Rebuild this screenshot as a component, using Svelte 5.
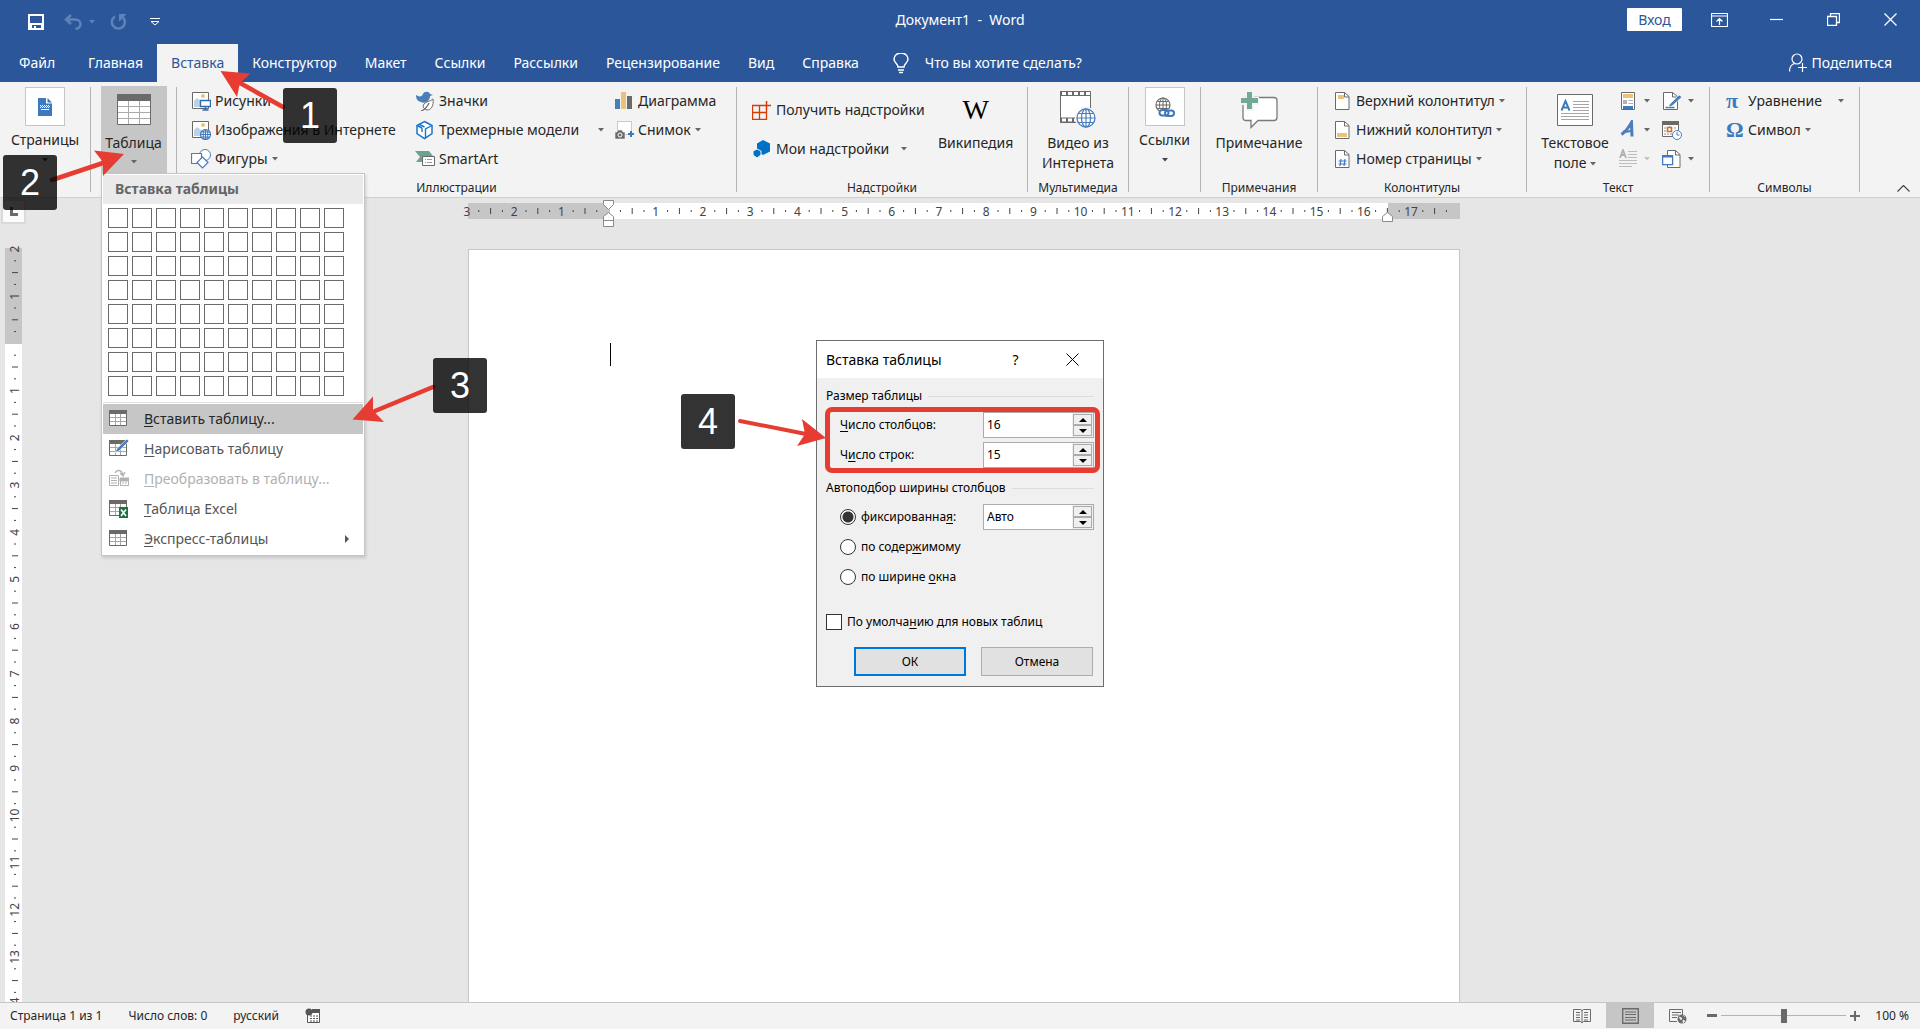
<script lang="ts">
  type Mark = { at: number; label?: string; kind: "num" | "bar" | "dot" };

  const tabs = ["Главная", "Вставка", "Конструктор", "Макет", "Ссылки", "Рассылки", "Рецензирование", "Вид", "Справка"];
  let activeTab = $state("Вставка");

  let columns = $state("16");
  let rows = $state("15");
  let fixedWidth = $state("Авто");
  let fit = $state("fixed");
  let remember = $state(false);
  let zoom = $state(50);

  // Ruler marks in quarters of a centimetre, counted from the margin
  function marks(from: number, to: number): Mark[] {
    const list: Mark[] = [];
    for (let q = from * 4; q < to * 4; q++) {
      if (q === 0) continue;
      const r = Math.abs(q) % 4;
      if (r === 0) list.push({ at: q / 4, label: String(Math.abs(q / 4)), kind: "num" });
      else list.push({ at: q / 4, kind: r === 2 ? "bar" : "dot" });
    }
    return list;
  }

  const hMarks = marks(-3, 18);
  const vMarks = marks(-2, 15);
  const cm = 47.2;
  const cells = Array.from({ length: 80 });

  const tableBase = `<path d="M.5 1.5h17v15h-17z" fill="#fff" stroke="#6a6a6a"/><path d="M0 1h18v4H0z" fill="#6a6a6a"/><path d="M6.5 5v11M11.5 5v11M1 8.500h16M1 12.500h16" stroke="#a6a6a6"/>`;
  const pic = `<path d="M1.500 1.500h16v16h-16z" fill="#fff" stroke="#6a6a6a"/><path d="M3 16V10l3-3 4 3v6z" fill="#bcd0e6"/><circle cx="12" cy="5" r="2" fill="#ebc17c"/>`;
  const pageBase = `<path d="M3.500 1.500h9l4.500 4v13H3.500z" fill="#fff" stroke="#6a6a6a"/><path d="M12.500 1.500v4.500h4.500" fill="none" stroke="#6a6a6a"/>`;

  const icons: Record<string, string> = {
    table: tableBase,
    draw: tableBase + `<path d="M18 0L8 9.500 6 13.500l4-1.500L20 2z" fill="#4a7ebb" stroke="#fff" stroke-width=".6"/>`,
    convert: `<path d="M.5 6.500h9v10h-9z" fill="#fff" stroke="#b1b1b1"/><path d="M2 9h6M2 11.500h6M2 14h6" stroke="#b1b1b1"/><path d="M11.500 9.500h8v7h-8z" fill="#fff" stroke="#b1b1b1"/><path d="M11 9h9v3h-9zM13 14h2M16 14h2" fill="#b1b1b1" stroke="#b1b1b1"/><path d="M6 4c2-4 7-3 8 2M11 4l3 3 2-4" fill="none" stroke="#b1b1b1" stroke-width="1.300"/>`,
    excel: tableBase + `<path d="M10 8h9v11h-9z" fill="#1e7145"/><path d="M12 10.500l5 6.500M17 10.500L12 17" stroke="#fff" stroke-width="1.600"/>`,
    picture: pic + `<path d="M9.500 9.500h10v6h-10z" fill="#fff" stroke="#2f6db5" stroke-width="1.400"/><path d="M14.500 15.500v3M11.500 19h6" stroke="#2f6db5" stroke-width="1.500"/>`,
    online: pic + `<circle cx="14.500" cy="14.500" r="5" fill="#fff" stroke="#3f79bd" stroke-width="1.200"/><path d="M9.500 14.500h10M14.500 9.500v10M10.500 12h8M10.500 17h8" stroke="#3f79bd"/><ellipse cx="14.500" cy="14.500" rx="2.300" ry="5" fill="none" stroke="#3f79bd"/>`,
    shapes: `<circle cx="14" cy="6" r="5.500" fill="#fff" stroke="#4a7ebb"/><path d="M.5 4.500h10v10H.5z" fill="#fff" stroke="#4a7ebb" stroke-width="1.200"/><path d="M11.500 8l5.500 5.500L11.500 19 6 13.500z" fill="#fff" stroke="#4a7ebb" stroke-width="1.200"/>`,
    symbols: `<path d="M1 4c3 2 6 2 7-1 1-3 6-3 7 0l3 1-3 1c0 5-5 8-9 6C2 10 1 7 1 4z" fill="#4a7ebb"/><path d="M18 8c1 7-2 11-6 11-3-1-5-3-3-6 2-3 6-2 9-5z" fill="#fff" stroke="#6a6a6a"/><path d="M6 20c3-1 6-4 8-8" fill="none" stroke="#6a6a6a" stroke-width="1.300"/>`,
    cube: `<path d="M9.500 1.500l7.500 4v8l-7.500 5-7.500-5v-8z" fill="#fff" stroke="#1a76cc" stroke-width="1.500"/><path d="M2 5.500l5 2.500M17 5.500l-6.500 3.500v9M4.500 4.500l5 2.500M7 8v4" fill="none" stroke="#1a76cc" stroke-width="1.400"/>`,
    smartart: `<path d="M0 2h14l4 5H8v6H1l4-5z" fill="#6ba292"/><path d="M7.500 7.500h12v9h-12z" fill="#fff" stroke="#6a6a6a"/><path d="M10 10.500h1M10 13.500h1M12 10.500h5M12 13.500h5" stroke="#9a9a9a"/>`,
    chart: `<path d="M1 8h5v10H1z" fill="#4a7ebb"/><path d="M7 1h5v17H7z" fill="#ebc17c"/><path d="M13 5h5v13h-5z" fill="#6a6a6a"/>`,
    shot: `<path d="M3.500 1.500h14v13h-14z" fill="#fff" stroke="#9a9a9a" stroke-dasharray="1 1"/><path d="M1 12h2l1-2h4l1 2h2v7H1z" fill="#6a6a6a" stroke="#f3f3f3" stroke-width=".6"/><circle cx="6" cy="15" r="2" fill="none" stroke="#fff"/><path d="M17 11v6M14 14h6" stroke="#3f79bd" stroke-width="2"/>`,
    store: `<path d="M.500 5.500h14v14h-14zM7.500 5.500v14M.500 12.500h14" fill="none" stroke="#d83b01" stroke-width="1.300"/><path d="M10 1h10v9h-10z" fill="#f3f3f3"/><path d="M14.500 1v9M10 5.500h9" stroke="#d83b01" stroke-width="1.500"/>`,
    addins: `<path d="M11 1l7 3.500v8L11 16l-6-3.500v-8z" fill="#0072c6"/><path d="M5 10l4 2v4l-4 3-4-3v-4z" fill="#0072c6" stroke="#f3f3f3"/>`,
    header: pageBase + `<path d="M6 4h6v4H6z" fill="#ebc17c"/>`,
    footer: pageBase + `<path d="M5 13h10v4H5z" fill="#ebc17c"/>`,
    number: pageBase + `<path d="M9 10l-1 7M13 10l-1 7M6.500 12h8M6.500 15h8" stroke="#3f79bd" stroke-width="1.200"/>`,
    parts: `<path d="M3.500 1.500h13v17h-13z" fill="#fff" stroke="#6a6a6a"/><path d="M5 3h10v4H5z" fill="#ebc17c"/><path d="M5 9h4v4H5z" fill="#b1b1b1"/><path d="M10.500 9.500H15M10.500 12.500H15" stroke="#b1b1b1"/><path d="M5 15h10v3H5z" fill="#3f79bd"/>`,
    wordart: `<path d="M3.500 14.500C7 12 11 7 13.500 2.500l.5 14" fill="none" stroke="#4a7ebb" stroke-width="3"/><path d="M5 11.500c3 1 6 0 9-1" fill="none" stroke="#4a7ebb" stroke-width="2"/>`,
    dropcap: `<path d="M2 9l3-8 3 8M3 6h4" fill="none" stroke="#b1b1b1" stroke-width="1.800"/><path d="M10 2.500h9M10 5.500h9M10 8.500h9M1 11.500h18M1 14.500h18M1 17.500h13" stroke="#bdbdbd"/>`,
    sign: `<path d="M1.500 1.500h9l5 4v13h-14z" fill="#fff" stroke="#6a6a6a"/><path d="M10.500 1.500v4.500h5" fill="none" stroke="#6a6a6a"/><path d="M3.500 16.500h9" stroke="#3f79bd" stroke-width="1.500"/><path d="M17 4L8 13l-2 3 4-1 10-9z" fill="#4a7ebb" stroke="#fff" stroke-width=".6"/>`,
    date: `<path d="M.5 1.500h16v15H.5z" fill="#fff" stroke="#6a6a6a"/><path d="M0 1h17v4H0z" fill="#6a6a6a"/><path d="M2 8h3M12 8h3M2 11h3M2 14h8M8 6v2" stroke="#8a8a8a" stroke-dasharray="2 1"/><path d="M5.500 7.500h4v4h-4z" fill="#fff" stroke="#d86a1a" stroke-width="1.600"/><circle cx="15" cy="15" r="4.500" fill="#fff" stroke="#4a7ebb"/><path d="M15 12v3h2.500" fill="none" stroke="#4a7ebb"/>`,
    object: `<path d="M5.500 1.500h8l4.500 4v13H5.500z" fill="#fff" stroke="#6a6a6a"/><path d="M13.500 1.500v4.500H18" fill="none" stroke="#6a6a6a"/><path d="M.6 6.600h10v9h-10z" fill="#fff" stroke="#3f79bd" stroke-width="1.300"/><path d="M0 6h11v2.500H0z" fill="#3f79bd"/>`,
  };
</script>

{#snippet icon(name: string)}
  <svg class="icon" viewBox="0 0 20 20" width="20" height="20" aria-hidden="true">{@html icons[name]}</svg>
{/snippet}

{#snippet caret()}
  <svg class="caret" viewBox="0 0 6 4" width="6" height="4" aria-hidden="true"><path d="M0 0h6L3 3.500z" fill="currentColor" /></svg>
{/snippet}

{#snippet small(name: string, label: string, drop = false)}
  <button class="small">
    {@render icon(name)}<span>{label}</span>
    {#if drop}{@render caret()}{/if}
  </button>
{/snippet}

{#snippet stepper(id: string)}
  <span class="stepper">
    <button aria-label="{id}: больше"><svg viewBox="0 0 8 4" width="8" height="4"><path d="M0 4h8L4 0z" /></svg></button>
    <button aria-label="{id}: меньше"><svg viewBox="0 0 8 4" width="8" height="4"><path d="M0 0h8L4 4z" /></svg></button>
  </span>
{/snippet}

<div class="app">
  <header class="title-bar">
    <div class="quick">
      <button class="q-save" aria-label="Сохранить">
        <svg viewBox="0 0 16 16" width="16" height="16"><path d="M1 1h14v14H1z" fill="none" stroke="#fff" stroke-width="2" /><path d="M1 9h14v6h-2v-4H4v4H1z" fill="#fff" /><path d="M6 12h2v3H6z" fill="#fff" /></svg>
      </button>
      <button class="q-undo" aria-label="Отменить">
        <svg viewBox="0 0 18 16" width="18" height="16"><path d="M7 1L2 5.500 7 10M2 5.500h9c3 0 5.500 2 5.500 4.500s-2 4.500-5 5" fill="none" stroke="#5f82b8" stroke-width="2.500" /></svg>
        {@render caret()}
      </button>
      <button class="q-redo" aria-label="Повторить">
        <svg viewBox="0 0 17 16" width="17" height="16"><path d="M5 2.500a6.500 6.500 0 1 0 8 1" fill="none" stroke="#5f82b8" stroke-width="2.500" /><path d="M9 .500h7M9.500 0v7l6-6.500" fill="#5f82b8" stroke="#5f82b8" /></svg>
      </button>
      <button aria-label="Настройка панели быстрого доступа">
        <svg viewBox="0 0 10 8" width="10" height="8"><path d="M0 .500h10M1 3.500l4 3.500 4-3.500z" fill="none" stroke="#fff" /></svg>
      </button>
    </div>
    <h1>Документ1&nbsp; -&nbsp; Word</h1>
    <div class="window">
      <button class="login">Вход</button>
      <button class="win" aria-label="Параметры отображения ленты">
        <svg viewBox="0 0 17 14" width="17" height="14"><path d="M.5.500h16v13H.5zM.5 3h16M8.500 12V6M5.500 8.500l3-3 3 3" fill="none" stroke="#fff" stroke-width="1.200" /></svg>
      </button>
      <button class="win" aria-label="Свернуть">
        <svg viewBox="0 0 13 13" width="13" height="13"><path d="M0 6.500h13" stroke="#fff" stroke-width="1.200" /></svg>
      </button>
      <button class="win" aria-label="Восстановить">
        <svg viewBox="0 0 13 13" width="13" height="13"><path d="M.5 3.500h9v9h-9zM3.500 3V.500h9v9H10" fill="none" stroke="#fff" stroke-width="1.300" /></svg>
      </button>
      <button class="win" aria-label="Закрыть">
        <svg viewBox="0 0 13 13" width="13" height="13"><path d="M.5.500l12 12M12.500.500l-12 12" stroke="#fff" stroke-width="1.300" /></svg>
      </button>
    </div>
  </header>

  <nav class="tabs">
    <button class="tab file">Файл</button>
    {#each tabs as tab}
      <button class="tab" class:active={tab === activeTab} onclick={() => (activeTab = tab)}>{tab}</button>
    {/each}
    <button class="tell">
      <svg viewBox="0 0 16 21" width="16" height="21"><path d="M5 14c0-3-4-4-4-8a7 6 0 0 1 14 0c0 4-4 5-4 8zM5 17h6M6 19.500h4" fill="none" stroke="#fff" stroke-width="1.500" /></svg>
      Что вы хотите сделать?
    </button>
    <button class="share">
      <svg viewBox="0 0 18 20" width="18" height="20"><circle cx="8" cy="6" r="5" fill="none" stroke="#fff" stroke-width="1.200" /><path d="M.5 18.500c0-4 2-7 5-8M13.500 10v9M9 14.500h9" fill="none" stroke="#fff" stroke-width="1.200" /></svg>
      Поделиться
    </button>
  </nav>

  <section class="ribbon">
    <div class="group pages">
      <button class="boxed">
        <span class="frame">
          <svg viewBox="0 0 14 18" width="14" height="18"><path d="M0 0h8v5.500h6V18H0z" fill="#3f79bd" /><path d="M9.500 0L14 4.500H9.500z" fill="#3f79bd" /><path d="M2 7.500h10M3 8.500h10M2 9.500h10" stroke="#fff" stroke-dasharray="1 1" /><path d="M3 11.500h8" stroke="#fff" /></svg>
        </span>
        <span>Страницы</span>
        {@render caret()}
      </button>
    </div>

    <div class="group tables">
      <button class="large pressed">
        <span class="pic">
          <svg viewBox="0 0 34 31" width="34" height="31"><path d="M.5.500h33v30H.5z" fill="#fff" stroke="#6a6a6a" /><path d="M0 0h34v7H0z" fill="#6a6a6a" /><path d="M11.500 7v23M22.500 7v23M1 12.500h32M1 18.500h32M1 24.500h32" stroke="#ababab" /></svg>
        </span>
        <span>Таблица</span>
        {@render caret()}
      </button>
      <div class="menu">
        <h2>Вставка таблицы</h2>
        <div class="cells">
          {#each cells as _}<i></i>{/each}
        </div>
        <button class="item hover">{@render icon("table")}<span><u>В</u>ставить таблицу...</span></button>
        <button class="item">{@render icon("draw")}<span><u>Н</u>арисовать таблицу</span></button>
        <button class="item" disabled>{@render icon("convert")}<span><u>П</u>реобразовать в таблицу...</span></button>
        <button class="item">{@render icon("excel")}<span><u>Т</u>аблица Excel</span></button>
        <button class="item">
          {@render icon("table")}<span><u>Э</u>кспресс-таблицы</span>
          <svg class="more" viewBox="0 0 4 8" width="4" height="8"><path d="M0 0v8l4-4z" fill="#555" /></svg>
        </button>
      </div>
    </div>

    <div class="group illustrations">
      <div class="body">
        <div class="col">
          {@render small("picture", "Рисунки")}
          {@render small("online", "Изображения в Интернете")}
          {@render small("shapes", "Фигуры", true)}
        </div>
        <div class="col models">
          {@render small("symbols", "Значки")}
          {@render small("cube", "Трехмерные модели", true)}
          {@render small("smartart", "SmartArt")}
        </div>
        <div class="col">
          {@render small("chart", "Диаграмма")}
          {@render small("shot", "Снимок", true)}
        </div>
      </div>
      <h3>Иллюстрации</h3>
    </div>

    <div class="group addins">
      <div class="body">
        <div class="col tall">
          {@render small("store", "Получить надстройки")}
          {@render small("addins", "Мои надстройки", true)}
        </div>
        <button class="large">
          <span class="pic wiki">W</span>
          <span>Википедия</span>
        </button>
      </div>
      <h3>Надстройки</h3>
    </div>

    <div class="group media">
      <button class="large">
        <span class="pic">
          <svg viewBox="0 0 36 37" width="36" height="37"><path d="M.5.500h30v31H.5z" fill="#fff" stroke="#6a6a6a" /><path d="M0 2.500h30M0 29h15" stroke="#6a6a6a" stroke-width="5" /><path d="M2 2.500h28M2 29h14" stroke="#fff" stroke-width="3" stroke-dasharray="4 2" /><circle cx="26" cy="27" r="11" fill="#f3f3f3" /><circle cx="26" cy="27" r="9" fill="#fff" stroke="#4a7ebb" stroke-width="1.300" /><path d="M17 27h18M26 18v18M18.500 22.500h15M18.500 31.500h15" stroke="#4a7ebb" stroke-width="1.200" /><ellipse cx="26" cy="27" rx="4.500" ry="9" fill="none" stroke="#4a7ebb" stroke-width="1.200" /></svg>
        </span>
        <span>Видео из<br />Интернета</span>
      </button>
      <h3>Мультимедиа</h3>
    </div>

    <div class="group links">
      <button class="boxed">
        <span class="frame">
          <svg viewBox="0 0 20 20" width="20" height="20"><circle cx="8" cy="8" r="7" fill="#fff" stroke="#6a6a6a" stroke-width="1.200" /><path d="M1 8h14M8 1v14M2.500 4.500h11M2.500 11.500h11" stroke="#6a6a6a" /><ellipse cx="8" cy="8" rx="3.500" ry="7" fill="none" stroke="#6a6a6a" /><path d="M4 12h16v8H4z" fill="#fff" /><rect x="4.500" y="13" width="9" height="5.500" rx="2.700" fill="none" stroke="#3f79bd" stroke-width="2" /><rect x="10" y="13.500" width="9" height="5.500" rx="2.700" fill="none" stroke="#3f79bd" stroke-width="2" /></svg>
        </span>
        <span>Ссылки</span>
        {@render caret()}
      </button>
    </div>

    <div class="group comments">
      <button class="large">
        <span class="pic">
          <svg viewBox="0 0 38 38" width="38" height="38"><path d="M6 6.500h28q3 0 3 3v17q0 3-3 3H18l-7 7v-7H6q-3 0-3-3v-17q0-3 3-3z" fill="#fff" stroke="#7a7a7a" stroke-width="1.300" /><path d="M6 0h8v6h5v8h-5v6H6v-6H0V6h6z" fill="#f3f3f3" /><path d="M7 1h5v6h6v5h-6v6H7v-6H1V7h6z" fill="#74a797" /></svg>
        </span>
        <span>Примечание</span>
      </button>
      <h3>Примечания</h3>
    </div>

    <div class="group headers">
      <div class="body">
        <div class="col">
          {@render small("header", "Верхний колонтитул", true)}
          {@render small("footer", "Нижний колонтитул", true)}
          {@render small("number", "Номер страницы", true)}
        </div>
      </div>
      <h3>Колонтитулы</h3>
    </div>

    <div class="group text">
      <div class="body">
        <button class="large">
          <span class="pic">
            <svg viewBox="0 0 36 32" width="36" height="32"><path d="M.5.500h35v31H.5z" fill="#fff" stroke="#6a6a6a" /><path d="M4.500 16.500l4-9.500 4 9.500M6 13.500h5" fill="none" stroke="#3f79bd" stroke-width="2" /><path d="M16 7.500h16M16 10.500h16M16 13.500h16M16 16.500h16M4 19.500h28M4 22.500h28M4 25.500h28" stroke="#a6a6a6" /></svg>
          </span>
          <span>Текстовое<br />поле {@render caret()}</span>
        </button>
        <div class="col icons">
          <button class="small" aria-label="Экспресс-блоки">{@render icon("parts")}{@render caret()}</button>
          <button class="small" aria-label="WordArt">{@render icon("wordart")}{@render caret()}</button>
          <button class="small" aria-label="Буквица" disabled>{@render icon("dropcap")}{@render caret()}</button>
        </div>
        <div class="col icons">
          <button class="small" aria-label="Строка подписи">{@render icon("sign")}{@render caret()}</button>
          <button class="small" aria-label="Дата и время">{@render icon("date")}</button>
          <button class="small" aria-label="Объект">{@render icon("object")}{@render caret()}</button>
        </div>
      </div>
      <h3>Текст</h3>
    </div>

    <div class="group signs">
      <div class="body">
        <div class="col">
          <button class="small split"><b>π</b><span>Уравнение</span>{@render caret()}</button>
          <button class="small"><b>Ω</b><span>Символ</span>{@render caret()}</button>
        </div>
      </div>
      <h3>Символы</h3>
    </div>

    <button class="collapse" aria-label="Свернуть ленту">
      <svg viewBox="0 0 13 7" width="13" height="7"><path d="M.5 6.500l6-6 6 6" fill="none" stroke="#444" stroke-width="1.200" /></svg>
    </button>
  </section>

  <main class="work">
    <div class="side">
      <span class="selector">
        <svg viewBox="0 0 8 9" width="8" height="9"><path d="M1.500 0v7.500H8" fill="none" stroke="#6a6a6a" stroke-width="3" /></svg>
      </span>
      <svg class="v-ruler" width="17" height="810" aria-hidden="true">
        <rect width="17" height="810" fill="#fff" />
        <rect width="17" height="96" fill="#c6c6c6" />
        {#each vMarks as m}
          <g transform="translate(9 {(m.at + 2) * cm + 1})">
            {#if m.kind === "num"}
              <text transform="rotate(-90)" y="5" text-anchor="middle">{m.label}</text>
            {:else if m.kind === "bar"}
              <path d="M-2 0h6" stroke="#444" />
            {:else}
              <path d="M0 0h2" stroke="#444" />
            {/if}
          </g>
        {/each}
      </svg>
    </div>

    <div class="canvas">
      <svg class="h-ruler" width="992" height="34" aria-hidden="true">
        <rect y="5" width="992" height="16" fill="#fff" />
        <rect y="5" width="142" height="16" fill="#c6c6c6" />
        <rect x="920" y="5" width="72" height="16" fill="#c6c6c6" />
        {#each hMarks as m}
          <g transform="translate({(m.at + 3) * cm - 1} 13)">
            {#if m.kind === "num"}
              <text y="5" text-anchor="middle">{m.label}</text>
            {:else if m.kind === "bar"}
              <path d="M0-3v6" stroke="#444" />
            {:else}
              <path d="M0-1v2" stroke="#444" />
            {/if}
          </g>
        {/each}
        <path d="M135.500 2.500h10v4l-5 5-5-5zM140.500 14.500l5 4v10h-10v-10zM135.500 22.500h10" fill="#fff" stroke="#8a8a8a" />
        <path d="M919.500 14.500l5 4v5h-10v-5z" fill="#fff" stroke="#8a8a8a" />
      </svg>
      <article class="page"><span class="cursor"></span></article>
    </div>
  </main>

  <footer class="status">
    <span>Страница 1 из 1</span>
    <span>Число слов: 0</span>
    <span>русский</span>
    <svg viewBox="0 0 16 16" width="16" height="16"><path d="M2.500 3.500h12v11h-12z" fill="#fff" stroke="#555" /><path d="M7 1h8v4H7z" fill="#555" /><circle cx="4" cy="4" r="3.500" fill="#555" /><path d="M5 8h8M5 10.500h8M5 13h8" stroke="#555" stroke-dasharray="2 1" /></svg>
    <div class="views">
      <button aria-label="Режим чтения">
        <svg viewBox="0 0 18 16" width="18" height="16"><path d="M.5 1.500h7l1.500 1 1.500-1h7v12h-7L9 15l-1.500-1.500h-7zM9 2v13M3 4.500h4M3 7h4M3 9.500h4M3 12h4M11 4.500h4M11 7h4M11 9.500h4M11 12h4" fill="none" stroke="#6a6a6a" /></svg>
      </button>
      <button class="on" aria-label="Разметка страницы">
        <svg viewBox="0 0 17 16" width="17" height="16"><path d="M.7.700h15.600v14.600H.7z" fill="none" stroke="#6a6a6a" stroke-width="1.400" /><path d="M3 4h11M3 6.500h11M3 9.500h11M3 12h11" stroke="#6a6a6a" /></svg>
      </button>
      <button aria-label="Веб-документ">
        <svg viewBox="0 0 18 16" width="18" height="16"><path d="M8 13.500H.5V1.500h13V7M3 4.500h9M3 7h7M3 9.500h5" fill="none" stroke="#6a6a6a" /><circle cx="13" cy="11" r="4.500" fill="#6a6a6a" /><path d="M10 9l3 1-1 2zM14 7l2 2M14 12l2 1-2 2z" fill="#f3f3f3" stroke="#f3f3f3" stroke-width=".6" /></svg>
      </button>
    </div>
    <div class="zoom">
      <button aria-label="Уменьшить"><svg viewBox="0 0 10 10" width="10" height="10"><path d="M0 4.500h10" stroke="#6a6a6a" stroke-width="3" /></svg></button>
      <input type="range" aria-label="Масштаб" min="0" max="100" bind:value={zoom} />
      <button aria-label="Увеличить"><svg viewBox="0 0 10 10" width="10" height="10"><path d="M0 5h10M5 0v10" stroke="#6a6a6a" stroke-width="2" /></svg></button>
    </div>
    <span class="percent">100 %</span>
  </footer>

  <div class="dialog" role="dialog" aria-label="Вставка таблицы">
    <div class="caption">
      <span>Вставка таблицы</span>
      <button aria-label="Справка">?</button>
      <button aria-label="Закрыть"><svg viewBox="0 0 13 13" width="13" height="13"><path d="M.5.500l12 12M12.500.500l-12 12" stroke="#000" /></svg></button>
    </div>
    <div class="form">
      <h4>Размер таблицы</h4>
      <div class="fields">
        <div class="row">
          <label for="cols"><u>Ч</u>исло столбцов:</label>
          <span class="field"><input id="cols" type="text" bind:value={columns} />{@render stepper("Столбцы")}</span>
        </div>
        <div class="row">
          <label for="rows">Ч<u>и</u>сло строк:</label>
          <span class="field"><input id="rows" type="text" bind:value={rows} />{@render stepper("Строки")}</span>
        </div>
      </div>
      <h4>Автоподбор ширины столбцов</h4>
      <div class="fields">
        <div class="row">
          <label><input type="radio" value="fixed" bind:group={fit} /><span>фиксированна<u>я</u>:</span></label>
          <span class="field"><input type="text" aria-label="Ширина столбца" bind:value={fixedWidth} />{@render stepper("Ширина")}</span>
        </div>
        <div class="row">
          <label><input type="radio" value="content" bind:group={fit} /><span>по содер<u>ж</u>имому</span></label>
        </div>
        <div class="row">
          <label><input type="radio" value="window" bind:group={fit} /><span>по ширине <u>о</u>кна</span></label>
        </div>
      </div>
      <label class="default"><input type="checkbox" bind:checked={remember} /><span>По умолча<u>н</u>ию для новых таблиц</span></label>
      <div class="actions">
        <button class="ok">ОК</button>
        <button>Отмена</button>
      </div>
    </div>
    <span class="outline"></span>
    <span class="badge four">4</span>
    <svg class="pointer" viewBox="0 0 90 32" width="90" height="32"><path d="M2 4l66 13" stroke="#e63c31" stroke-width="4" stroke-linecap="round" /><path d="M88 21L64 2l3 15-8 12z" fill="#e63c31" /></svg>
  </div>

  <svg class="arrows" viewBox="0 0 500 440" width="500" height="440" aria-hidden="true">
    <g stroke="#e63c31" stroke-width="4.500" stroke-linecap="round"><path d="M283 107l-43-24M52 180l51-17M433 387l-58 24" /></g>
    <path d="M220.500 71l30 2.500-10.500 9.500-3 14zM124 154l-30-3.500 9 11.500v14zM352.500 419.500l20.500-23v14l11 11.500z" fill="#e63c31" />
  </svg>
  <span class="badge one">1</span>
  <span class="badge two">2</span>
  <span class="badge three">3</span>
</div>

<style>
  :global(body) {
    overflow: hidden;
  }

  .app {
    position: relative;
    display: flex;
    flex-direction: column;
    height: 100vh;
    overflow: hidden;
    background: #e6e6e6;
    color: #262626;
    font-family: "Noto Sans", "Open Sans", sans-serif;
    font-size: 15px;
    line-height: 20px;
  }

  .app * {
    box-sizing: border-box;
  }

  button {
    margin: 0;
    padding: 0;
    border: 0;
    background: none;
    color: inherit;
    font: inherit;
    white-space: nowrap;
  }

  svg {
    flex: none;
    display: block;
  }

  h1,
  h2,
  h3,
  h4 {
    margin: 0;
    font-weight: 400;
  }

  .title-bar {
    display: grid;
    grid-template-columns: 1fr auto 1fr;
    align-items: center;
    height: 44px;
    padding: 0 1px 5px;
    background: #2b579a;
    color: #fff;
  }

  .title-bar h1 {
    font-size: 14px;
  }

  .quick {
    display: flex;
    align-items: center;
    padding: 5px 0 0 27px;
  }

  .quick button {
    display: flex;
    align-items: center;
  }

  .q-save {
    width: 36px;
  }

  .q-undo {
    width: 46px;
    gap: 7px;
  }

  .q-undo .caret {
    color: #5f82b8;
  }

  .q-redo {
    width: 40px;
  }

  .window {
    display: flex;
    align-items: center;
    justify-content: flex-end;
  }

  .login {
    width: 55px;
    height: 23px;
    margin-right: 9px;
    border-radius: 1px;
    background: #fff;
    color: #2b579a;
    font-size: 14px;
  }

  .win {
    display: flex;
    justify-content: center;
    width: 57px;
  }

  .tabs {
    display: flex;
    height: 38px;
    padding-left: 5px;
    background: #2b579a;
    color: #fff;
    font-size: 14px;
  }

  .tab {
    padding: 0 14px;
  }

  .file {
    width: 69px;
    text-align: left;
  }

  .tab.active {
    background: #f3f3f3;
    color: #2b579a;
  }

  .tell,
  .share {
    display: flex;
    align-items: center;
  }

  .tell {
    gap: 16px;
    margin-left: 20px;
  }

  .share {
    gap: 4px;
    margin-left: auto;
    padding-right: 28px;
  }

  .ribbon {
    display: flex;
    height: 116px;
    border-bottom: 1px solid #d0d0d0;
    background: #f3f3f3;
    font-size: 14px;
  }

  .group {
    position: relative;
    display: flex;
    flex: none;
    flex-direction: column;
    align-items: center;
    padding: 4px 1px 0 0;
  }

  .group::after {
    content: "";
    position: absolute;
    top: 5px;
    right: 0;
    bottom: 5px;
    width: 1px;
    background: #b4b4b4;
  }

  .group h3 {
    margin-top: auto;
    font-size: 12px;
    line-height: 18px;
  }

  .body {
    display: flex;
    width: 100%;
    height: 90px;
  }

  .col {
    display: flex;
    flex: none;
    flex-direction: column;
    align-items: flex-start;
  }

  .small {
    display: flex;
    align-items: center;
    gap: 4px;
    height: 29px;
  }

  .caret {
    color: #666;
  }

  .small:disabled .caret {
    color: #c4c4c4;
  }

  .large,
  .boxed {
    display: flex;
    flex-direction: column;
    align-items: center;
  }

  .pic {
    display: flex;
    align-items: center;
    justify-content: center;
    height: 47px;
  }

  .large > .caret {
    margin-top: 7px;
  }

  .large .caret {
    display: inline-block;
    vertical-align: middle;
  }

  .frame {
    display: flex;
    align-items: center;
    justify-content: center;
    width: 40px;
    height: 39px;
    margin: 1px 0 4px;
    border: 1px solid #c6c6c6;
    background: #fff;
  }

  .boxed .caret {
    margin-top: 8px;
    color: #444;
  }

  .pages {
    width: 91px;
  }

  .tables {
    width: 86px;
  }

  .pressed {
    width: 66px;
    height: 88px;
    background: #c6c6c6;
  }

  .illustrations {
    width: 560px;
  }

  .illustrations .body {
    padding-left: 14px;
  }

  .illustrations .col {
    width: 224px;
  }

  .illustrations .col.models {
    width: 199px;
  }

  .illustrations .col:last-child {
    width: auto;
  }

  .models .small:nth-child(2) {
    width: 189px;
  }

  .models .caret,
  .split .caret {
    margin-left: auto;
  }

  .addins {
    width: 291px;
  }

  .addins .body {
    padding-left: 15px;
  }

  .tall {
    width: 186px;
    padding-top: 4px;
  }

  .tall .small {
    height: 39px;
  }

  .tall .caret {
    margin-left: 8px;
  }

  .wiki {
    color: #000;
    font-family: "Liberation Serif", serif;
    font-size: 28px;
  }

  .media {
    width: 101px;
  }

  .links {
    width: 72px;
  }

  .comments {
    width: 117px;
  }

  .headers {
    width: 209px;
  }

  .headers .body {
    padding-left: 14px;
  }

  .text {
    width: 183px;
  }

  .text .body {
    padding-left: 12px;
  }

  .text .large {
    width: 72px;
    margin-right: 7px;
  }

  .icons {
    width: 44px;
  }

  .icons .small {
    gap: 6px;
  }

  .signs {
    width: 150px;
  }

  .signs .body {
    padding-left: 16px;
  }

  .signs b {
    width: 18px;
    color: #3f79bd;
    font-family: "Liberation Serif", serif;
    font-size: 22px;
    text-align: left;
  }

  .signs .split {
    width: 118px;
  }

  .collapse {
    align-self: flex-end;
    margin-left: auto;
    padding: 0 10px 5px;
  }

  .menu {
    position: absolute;
    top: 91px;
    left: 10px;
    z-index: 2;
    width: 264px;
    padding: 1px;
    border: 1px solid #c6c6c6;
    background: #fff;
    box-shadow: 1px 2px 3px rgba(0, 0, 0, 0.15);
    color: #555;
  }

  .menu h2 {
    height: 29px;
    padding-left: 12px;
    background: #eaeaea;
    color: #666;
    font-size: 14px;
    font-weight: 700;
    line-height: 28px;
  }

  .cells {
    display: grid;
    grid-template-columns: repeat(10, 20px);
    gap: 4px;
    margin-bottom: 1px;
    padding: 4px 5px 6px;
    border-bottom: 1px solid #e0e0e0;
  }

  .cells i {
    height: 20px;
    border: 1px solid #6a6a6a;
  }

  .item {
    display: flex;
    align-items: center;
    width: 100%;
    height: 30px;
    gap: 15px;
    padding: 0 14px 0 6px;
  }

  .item.hover {
    background: #c6c6c6;
    color: #262626;
  }

  .item:disabled {
    color: #b1b1b1;
  }

  .more {
    margin-left: auto;
  }

  u {
    text-underline-offset: 2px;
  }

  .work {
    display: flex;
    flex: 1;
    min-height: 0;
    overflow: hidden;
    padding-right: 17px;
  }

  .side {
    width: 24px;
    padding-left: 5px;
  }

  .selector {
    display: flex;
    align-items: center;
    justify-content: center;
    width: 21px;
    height: 21px;
    margin: 3px 0 26px -2px;
    background: #fbfbfb;
    outline: 2px solid #dadada;
  }

  .v-ruler,
  .h-ruler {
    overflow: visible;
  }

  .v-ruler text,
  .h-ruler text {
    fill: #444;
    font-size: 12px;
  }

  .canvas {
    display: flex;
    flex: 1;
    flex-direction: column;
    align-items: center;
  }

  .page {
    flex: 1;
    width: 992px;
    margin-top: 17px;
    padding: 93px 141px;
    border: 1px solid #c6c6c6;
    border-bottom: 0;
    background: #fff;
  }

  .cursor {
    display: block;
    width: 1px;
    height: 23px;
    background: #000;
  }

  .status {
    display: flex;
    position: relative;
    align-items: center;
    height: 27px;
    padding: 0 11px 1px 10px;
    gap: 26px;
    border-top: 1px solid #c6c6c6;
    background: #f3f3f3;
    font-size: 12px;
  }

  .views {
    display: flex;
    align-self: stretch;
    margin-left: auto;
  }

  .views button {
    display: flex;
    align-items: center;
    justify-content: center;
    width: 48px;
  }

  .views .on {
    background: #c6c6c6;
  }

  .zoom {
    display: flex;
    align-items: center;
    gap: 4px;
    margin-left: -21px;
  }

  .zoom input {
    width: 125px;
    height: 14px;
    margin: 0;
    appearance: none;
    background: linear-gradient(#b4b4b4, #b4b4b4) center / 100% 1px no-repeat;
  }

  .zoom input::-webkit-slider-thumb {
    width: 6px;
    height: 14px;
    appearance: none;
    background: #6a6a6a;
  }

  .percent {
    margin-left: -11px;
  }

  .dialog {
    position: absolute;
    top: 340px;
    left: calc(50% - 144px);
    width: 288px;
    border: 1px solid #6e6e6e;
    background: #f0f0f0;
    color: #000;
    font-size: 12px;
  }

  .caption {
    display: flex;
    align-items: center;
    height: 37px;
    padding-left: 9px;
    background: #fff;
    font-size: 14px;
  }

  .caption span {
    flex: 1;
  }

  .caption button {
    display: flex;
    justify-content: center;
    width: 57px;
  }

  .caption button:last-child {
    margin-right: 2px;
  }

  .form {
    padding: 9px 9px 10px;
  }

  .form h4 {
    display: flex;
    align-items: center;
    gap: 6px;
    height: 18px;
    font-size: 12px;
  }

  .form h4::after {
    content: "";
    flex: 1;
    height: 1px;
    background: #dcdcdc;
  }

  .fields {
    padding: 5px 0 9px 14px;
  }

  .row {
    display: flex;
    align-items: center;
    justify-content: space-between;
    height: 30px;
  }

  .form label {
    display: flex;
    align-items: center;
    white-space: pre;
  }

  .field {
    display: flex;
    width: 111px;
    height: 26px;
    border: 1px solid #ababab;
    background: #fff;
  }

  .field input {
    flex: 1;
    min-width: 0;
    padding: 0 3px;
    border: 0;
    outline: 0;
    font: inherit;
  }

  .stepper {
    display: flex;
    flex-direction: column;
    width: 21px;
    padding: 1px;
    background: #f0f0f0;
  }

  .stepper button {
    display: flex;
    flex: 1;
    align-items: center;
    justify-content: center;
    border: 1px solid #ababab;
  }

  input[type="radio"],
  input[type="checkbox"] {
    flex: none;
    width: 16px;
    height: 16px;
    margin: 0 5px 0 0;
    appearance: none;
    border: 1px solid #333;
    background: #fff;
  }

  input[type="radio"] {
    border-radius: 50%;
  }

  input[type="radio"]:checked {
    background: radial-gradient(circle, #333 5px, #fff 6px);
  }

  .form .default {
    height: 30px;
    margin-top: 6px;
  }

  .actions {
    display: flex;
    justify-content: flex-end;
    gap: 15px;
    margin-top: 10px;
    padding-right: 1px;
  }

  .actions button {
    width: 112px;
    height: 29px;
    border: 1px solid #adadad;
    background: #e1e1e1;
  }

  .actions .ok {
    border: 2px solid #0078d7;
  }

  .outline {
    position: absolute;
    top: 66px;
    left: 8px;
    width: 275px;
    height: 66px;
    border: 5px solid #e63c31;
    border-radius: 7px;
  }

  .badge {
    position: absolute;
    z-index: 3;
    width: 54px;
    height: 55px;
    border-radius: 3px;
    background: rgba(0, 0, 0, 0.8);
    color: #fff;
    font-family: "Liberation Sans", sans-serif;
    font-size: 36px;
    line-height: 55px;
    text-align: center;
  }

  .one {
    top: 88px;
    left: 283px;
  }

  .two {
    top: 155px;
    left: 3px;
  }

  .three {
    top: 358px;
    left: 433px;
  }

  .four {
    top: 53px;
    left: -136px;
  }

  .pointer {
    position: absolute;
    top: 76px;
    left: -79px;
  }

  .arrows {
    position: absolute;
    top: 0;
    left: 0;
    z-index: 3;
    pointer-events: none;
  }
</style>
